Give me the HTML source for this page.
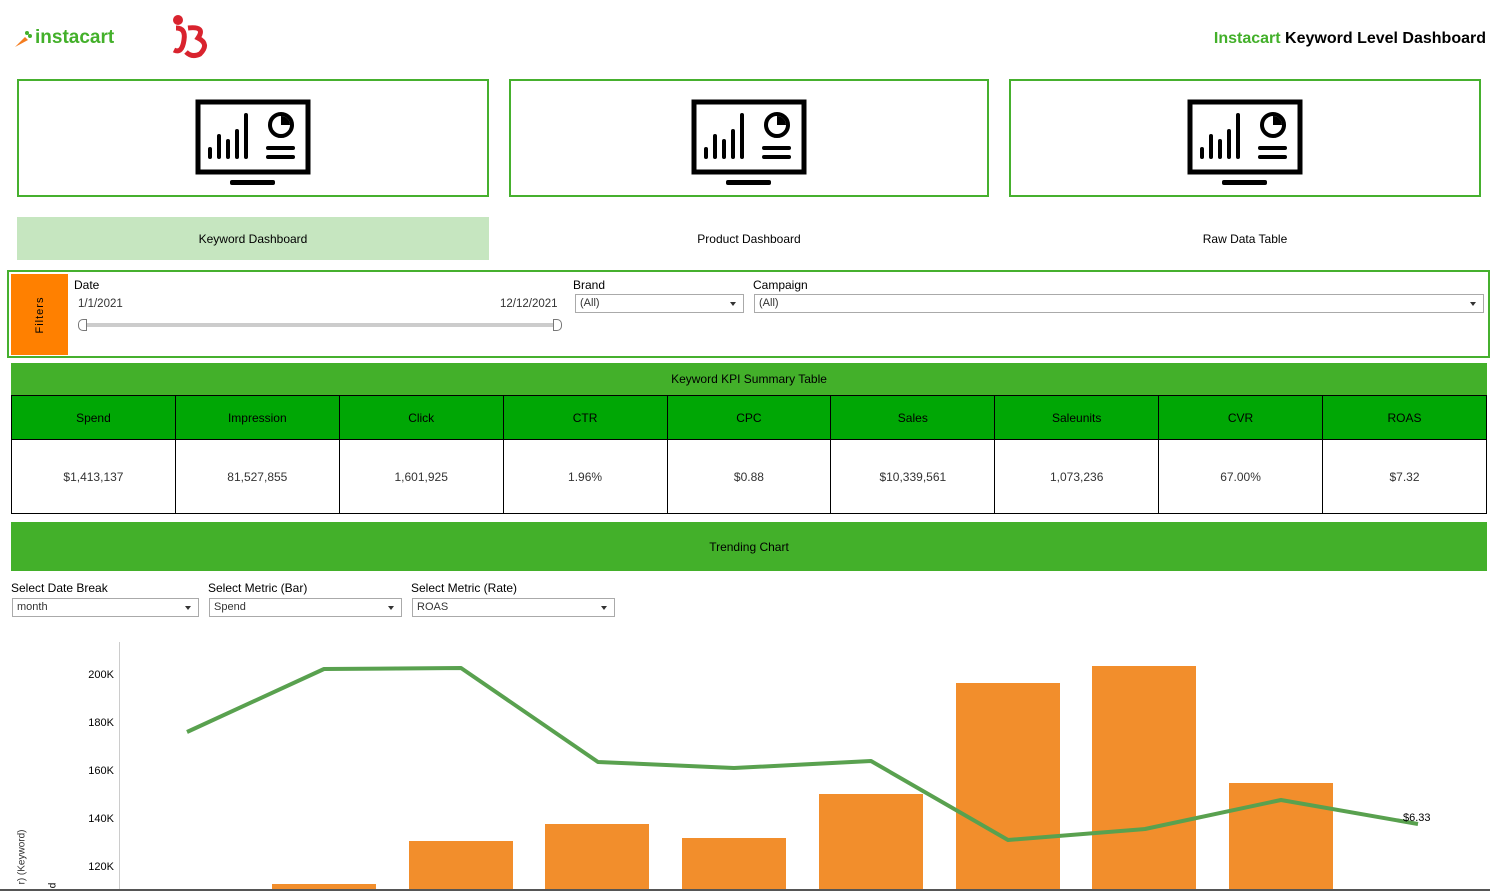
<!DOCTYPE html>
<html><head><meta charset="utf-8"><style>
*{margin:0;padding:0;box-sizing:border-box}
body{width:1490px;height:891px;overflow:hidden;background:#fff;font-family:"Liberation Sans",sans-serif;color:#000;position:relative}
.a{position:absolute}
.card{position:absolute;top:79px;height:118px;border:2px solid #46b02e;background:#fff}
.tab{position:absolute;top:217px;height:43px;font-size:12px;display:flex;align-items:center;justify-content:center}
.dd{position:absolute;border:1px solid #aaa;height:19px;font-size:11px;color:#333;padding:2px 4px;background:#fff}
.dd:after{content:"";position:absolute;right:7px;top:7px;border-left:3px solid transparent;border-right:3px solid transparent;border-top:4px solid #333}
.lbl{position:absolute;font-size:12px}
table{border-collapse:collapse;position:absolute;left:11px;top:395px;width:1476px;table-layout:fixed}
td{border:1px solid #000;text-align:center;font-size:12px}
tr.h td{background:#00a705;height:44px}
tr.v td{height:74px;color:#333}
.yl{position:absolute;left:70px;width:44px;text-align:right;font-size:11px}
</style></head><body>
<div class="a" style="left:13px;top:29px">
<svg width="20" height="20" viewBox="0 0 20 20"><path d="M2 18 L12 8 L15 11 Z" fill="#f47c1f"/><circle cx="14" cy="4" r="2" fill="#43b02a"/><circle cx="17" cy="7" r="2" fill="#43b02a"/></svg></div>
<div class="a" style="left:35px;top:27px;font-size:19px;color:#43b02a;font-weight:bold;letter-spacing:0">instacart</div>
<div class="a" style="left:170px;top:14px">
<svg width="42" height="46" viewBox="0 0 42 46"><circle cx="8" cy="6" r="5" fill="#d9232e"/><path d="M6 14 Q16 14 14 26 Q12 40 4 36" stroke="#d9232e" stroke-width="5" fill="none"/><path d="M18 14 Q36 12 28 24 Q40 30 30 40 Q22 44 16 38" stroke="#d9232e" stroke-width="5" fill="none"/></svg></div>
<div class="a" style="right:4px;top:30px;font-size:16px;font-weight:bold"><span style="color:#43b02a">Instacart</span> Keyword Level Dashboard</div>

<div class="card" style="left:17px;width:472px"></div>
<div class="card" style="left:509px;width:480px"></div>
<div class="card" style="left:1009px;width:472px"></div>
<svg class="a" style="left:195px;top:99px" width="116" height="88" viewBox="0 0 116 88"><rect x="3" y="3" width="110" height="70" fill="none" stroke="#000" stroke-width="5"/><rect x="35" y="81" width="45" height="5" rx="2"/><g stroke="#000" stroke-width="4" stroke-linecap="round"><line x1="15" y1="58" x2="15" y2="50"/><line x1="24" y1="58" x2="24" y2="37"/><line x1="33" y1="58" x2="33" y2="42"/><line x1="42" y1="58" x2="42" y2="32"/><line x1="51" y1="58" x2="51" y2="16"/><line x1="73" y1="49" x2="98" y2="49"/><line x1="73" y1="58" x2="98" y2="58"/></g><circle cx="86" cy="26" r="11" fill="none" stroke="#000" stroke-width="4"/><path d="M86 26 L86 17 A9 9 0 0 1 95 26 Z"/></svg>
<svg class="a" style="left:691px;top:99px" width="116" height="88" viewBox="0 0 116 88"><rect x="3" y="3" width="110" height="70" fill="none" stroke="#000" stroke-width="5"/><rect x="35" y="81" width="45" height="5" rx="2"/><g stroke="#000" stroke-width="4" stroke-linecap="round"><line x1="15" y1="58" x2="15" y2="50"/><line x1="24" y1="58" x2="24" y2="37"/><line x1="33" y1="58" x2="33" y2="42"/><line x1="42" y1="58" x2="42" y2="32"/><line x1="51" y1="58" x2="51" y2="16"/><line x1="73" y1="49" x2="98" y2="49"/><line x1="73" y1="58" x2="98" y2="58"/></g><circle cx="86" cy="26" r="11" fill="none" stroke="#000" stroke-width="4"/><path d="M86 26 L86 17 A9 9 0 0 1 95 26 Z"/></svg>
<svg class="a" style="left:1187px;top:99px" width="116" height="88" viewBox="0 0 116 88"><rect x="3" y="3" width="110" height="70" fill="none" stroke="#000" stroke-width="5"/><rect x="35" y="81" width="45" height="5" rx="2"/><g stroke="#000" stroke-width="4" stroke-linecap="round"><line x1="15" y1="58" x2="15" y2="50"/><line x1="24" y1="58" x2="24" y2="37"/><line x1="33" y1="58" x2="33" y2="42"/><line x1="42" y1="58" x2="42" y2="32"/><line x1="51" y1="58" x2="51" y2="16"/><line x1="73" y1="49" x2="98" y2="49"/><line x1="73" y1="58" x2="98" y2="58"/></g><circle cx="86" cy="26" r="11" fill="none" stroke="#000" stroke-width="4"/><path d="M86 26 L86 17 A9 9 0 0 1 95 26 Z"/></svg>

<div class="tab" style="left:17px;width:472px;background:#c6e6c0">Keyword Dashboard</div>
<div class="tab" style="left:509px;width:480px">Product Dashboard</div>
<div class="tab" style="left:1009px;width:472px">Raw Data Table</div>

<div class="a" style="left:7px;top:270px;width:1483px;height:88px;border:2px solid #46b02e"></div>
<div class="a" style="left:11px;top:274px;width:57px;height:81px;background:#ff8000"></div>
<div class="a" style="left:40px;top:315px;transform:translate(-50%,-50%) rotate(-90deg);font-size:11px;letter-spacing:1px">Filters</div>
<div class="lbl" style="left:74px;top:278px">Date</div>
<div class="lbl" style="left:78px;top:298px;font-size:11.5px;color:#333">1/1/2021</div>
<div class="lbl" style="left:500px;top:298px;font-size:11.5px;color:#333">12/12/2021</div>
<div class="a" style="left:80px;top:323px;width:480px;height:4px;background:#ccc"></div>
<div class="a" style="left:78px;top:319px;width:9px;height:12px;border:1px solid #777;border-radius:5px 0 0 5px;background:#fff"></div>
<div class="a" style="left:553px;top:319px;width:9px;height:12px;border:1px solid #777;border-radius:0 5px 5px 0;background:#fff"></div>
<div class="lbl" style="left:573px;top:278px">Brand</div>
<div class="dd" style="left:575px;top:294px;width:169px">(All)</div>
<div class="lbl" style="left:753px;top:278px">Campaign</div>
<div class="dd" style="left:754px;top:294px;width:730px">(All)</div>

<div class="a" style="left:11px;top:363px;width:1476px;height:32px;background:#43b02a;font-size:12px;display:flex;align-items:center;justify-content:center">Keyword KPI Summary Table</div>
<table><tr class="h"><td>Spend</td><td>Impression</td><td>Click</td><td>CTR</td><td>CPC</td><td>Sales</td><td>Saleunits</td><td>CVR</td><td>ROAS</td></tr>
<tr class="v"><td>$1,413,137</td><td>81,527,855</td><td>1,601,925</td><td>1.96%</td><td>$0.88</td><td>$10,339,561</td><td>1,073,236</td><td>67.00%</td><td>$7.32</td></tr></table>

<div class="a" style="left:11px;top:522px;width:1476px;height:49px;background:#43b02a;font-size:12px;display:flex;align-items:center;justify-content:center">Trending Chart</div>
<div class="lbl" style="left:11px;top:581px">Select Date Break</div>
<div class="dd" style="left:12px;top:598px;width:187px">month</div>
<div class="lbl" style="left:208px;top:581px">Select Metric (Bar)</div>
<div class="dd" style="left:209px;top:598px;width:193px">Spend</div>
<div class="lbl" style="left:411px;top:581px">Select Metric (Rate)</div>
<div class="dd" style="left:412px;top:598px;width:203px">ROAS</div>

<div class="a" style="left:119px;top:642px;width:1px;height:248px;background:#ccc"></div>
<div class="yl" style="top:669px">200K</div>
<div class="yl" style="top:717px">180K</div>
<div class="yl" style="top:765px">160K</div>
<div class="yl" style="top:813px">140K</div>
<div class="yl" style="top:861px">120K</div>
<div class="a" style="left:22px;top:857px;transform:translate(-50%,-50%) rotate(-90deg);font-size:10px;color:#333;white-space:nowrap">r) (Keyword)</div>
<div class="a" style="left:50px;top:880px;font-size:10px;transform:rotate(-90deg)">d</div>
<svg class="a" style="left:0;top:640px" width="1490" height="251">
<g fill="#f28e2c">
<rect x="272" y="244" width="104" height="6"/><rect x="409" y="201" width="104" height="49"/><rect x="545" y="184" width="104" height="66"/><rect x="682" y="198" width="104" height="52"/><rect x="819" y="154" width="104" height="96"/><rect x="956" y="43" width="104" height="207"/><rect x="1092" y="26" width="104" height="224"/><rect x="1229" y="143" width="104" height="107"/></g>
<polyline points="187,92 324,29 461,28 598,122 734,128 871,121 1008,200 1145,189 1281,160 1418,184" fill="none" stroke="#59a14f" stroke-width="4" stroke-linejoin="round"/>
<text x="1403" y="181" font-size="11" font-family="Liberation Sans">$6.33</text>
<rect x="0" y="249" width="1490" height="2" fill="#555"/>
</svg>
</body></html>
